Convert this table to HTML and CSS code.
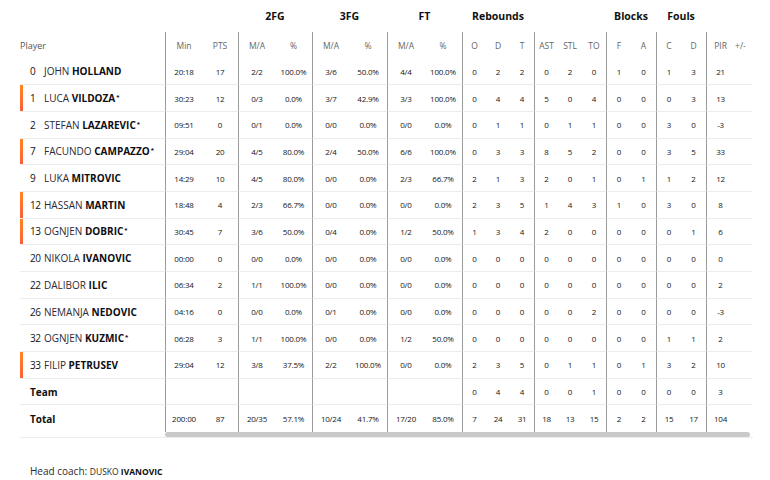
FILE: index.html
```html
<!DOCTYPE html>
<html lang="en">
<head>
<meta charset="utf-8">
<title>Box score</title>
<link rel="stylesheet" href="styles.css">
</head>
<body>
<div class="wrap">
  <table class="stats">
    <colgroup>
      <col class="c-player">
      <col class="c37"><col class="c36">
      <col class="c37"><col class="c37">
      <col class="c37"><col class="c38">
      <col class="c37"><col class="c38">
      <col class="c24"><col class="c24"><col class="c24">
      <col class="c24"><col class="c24"><col class="c24">
      <col class="c25"><col class="c25">
      <col class="c25"><col class="c25">
      <col class="c28"><col class="c18">
    </colgroup>
    <thead>
      <tr class="groups">
        <th></th>
        <th colspan="2"></th>
        <th colspan="2">2FG</th>
        <th colspan="2">3FG</th>
        <th colspan="2">FT</th>
        <th colspan="3">Rebounds</th>
        <th colspan="3"></th>
        <th colspan="2">Blocks</th>
        <th colspan="2">Fouls</th>
        <th colspan="2"></th>
      </tr>
      <tr class="sub">
        <th class="player-h">Player</th>
        <th>Min</th><th>PTS</th>
        <th>M/A</th><th>%</th>
        <th>M/A</th><th>%</th>
        <th>M/A</th><th>%</th>
        <th>O</th><th>D</th><th>T</th>
        <th>AST</th><th>STL</th><th>TO</th>
        <th>F</th><th>A</th>
        <th>C</th><th>D</th>
        <th>PIR</th><th class="pm">+/-</th>
      </tr>
    </thead>
    <tbody>
      <tr>
        <td class="name"><span class="num">0</span>JOHN <b>HOLLAND</b></td>
        <td>20:18</td><td>17</td><td>2/2</td><td>100.0%</td><td>3/6</td><td>50.0%</td><td>4/4</td><td>100.0%</td>
        <td>0</td><td>2</td><td>2</td><td>0</td><td>2</td><td>0</td><td>1</td><td>0</td><td>1</td><td>3</td><td>21</td><td></td>
      </tr>
      <tr class="starter">
        <td class="name"><span class="num">1</span>LUCA <b>VILDOZA<sup>*</sup></b></td>
        <td>30:23</td><td>12</td><td>0/3</td><td>0.0%</td><td>3/7</td><td>42.9%</td><td>3/3</td><td>100.0%</td>
        <td>0</td><td>4</td><td>4</td><td>5</td><td>0</td><td>4</td><td>0</td><td>0</td><td>0</td><td>3</td><td>13</td><td></td>
      </tr>
      <tr>
        <td class="name"><span class="num">2</span>STEFAN <b>LAZAREVIC<sup>*</sup></b></td>
        <td>09:51</td><td>0</td><td>0/1</td><td>0.0%</td><td>0/0</td><td>0.0%</td><td>0/0</td><td>0.0%</td>
        <td>0</td><td>1</td><td>1</td><td>0</td><td>1</td><td>1</td><td>0</td><td>0</td><td>3</td><td>0</td><td>-3</td><td></td>
      </tr>
      <tr class="starter">
        <td class="name"><span class="num">7</span>FACUNDO <b>CAMPAZZO<sup>*</sup></b></td>
        <td>29:04</td><td>20</td><td>4/5</td><td>80.0%</td><td>2/4</td><td>50.0%</td><td>6/6</td><td>100.0%</td>
        <td>0</td><td>3</td><td>3</td><td>8</td><td>5</td><td>2</td><td>0</td><td>0</td><td>3</td><td>5</td><td>33</td><td></td>
      </tr>
      <tr>
        <td class="name"><span class="num">9</span>LUKA <b>MITROVIC</b></td>
        <td>14:29</td><td>10</td><td>4/5</td><td>80.0%</td><td>0/0</td><td>0.0%</td><td>2/3</td><td>66.7%</td>
        <td>2</td><td>1</td><td>3</td><td>2</td><td>0</td><td>1</td><td>0</td><td>1</td><td>1</td><td>2</td><td>12</td><td></td>
      </tr>
      <tr class="starter">
        <td class="name"><span class="num">12</span>HASSAN <b>MARTIN</b></td>
        <td>18:48</td><td>4</td><td>2/3</td><td>66.7%</td><td>0/0</td><td>0.0%</td><td>0/0</td><td>0.0%</td>
        <td>2</td><td>3</td><td>5</td><td>1</td><td>4</td><td>3</td><td>1</td><td>0</td><td>3</td><td>0</td><td>8</td><td></td>
      </tr>
      <tr class="starter">
        <td class="name"><span class="num">13</span>OGNJEN <b>DOBRIC<sup>*</sup></b></td>
        <td>30:45</td><td>7</td><td>3/6</td><td>50.0%</td><td>0/4</td><td>0.0%</td><td>1/2</td><td>50.0%</td>
        <td>1</td><td>3</td><td>4</td><td>2</td><td>0</td><td>0</td><td>0</td><td>0</td><td>0</td><td>1</td><td>6</td><td></td>
      </tr>
      <tr>
        <td class="name"><span class="num">20</span>NIKOLA <b>IVANOVIC</b></td>
        <td>00:00</td><td>0</td><td>0/0</td><td>0.0%</td><td>0/0</td><td>0.0%</td><td>0/0</td><td>0.0%</td>
        <td>0</td><td>0</td><td>0</td><td>0</td><td>0</td><td>0</td><td>0</td><td>0</td><td>0</td><td>0</td><td>0</td><td></td>
      </tr>
      <tr>
        <td class="name"><span class="num">22</span>DALIBOR <b>ILIC</b></td>
        <td>06:34</td><td>2</td><td>1/1</td><td>100.0%</td><td>0/0</td><td>0.0%</td><td>0/0</td><td>0.0%</td>
        <td>0</td><td>0</td><td>0</td><td>0</td><td>0</td><td>0</td><td>0</td><td>0</td><td>0</td><td>0</td><td>2</td><td></td>
      </tr>
      <tr>
        <td class="name"><span class="num">26</span>NEMANJA <b>NEDOVIC</b></td>
        <td>04:16</td><td>0</td><td>0/0</td><td>0.0%</td><td>0/1</td><td>0.0%</td><td>0/0</td><td>0.0%</td>
        <td>0</td><td>0</td><td>0</td><td>0</td><td>0</td><td>2</td><td>0</td><td>0</td><td>0</td><td>0</td><td>-3</td><td></td>
      </tr>
      <tr>
        <td class="name"><span class="num">32</span>OGNJEN <b>KUZMIC<sup>*</sup></b></td>
        <td>06:28</td><td>3</td><td>1/1</td><td>100.0%</td><td>0/0</td><td>0.0%</td><td>1/2</td><td>50.0%</td>
        <td>0</td><td>0</td><td>0</td><td>0</td><td>0</td><td>0</td><td>0</td><td>0</td><td>1</td><td>1</td><td>2</td><td></td>
      </tr>
      <tr class="starter">
        <td class="name"><span class="num">33</span>FILIP <b>PETRUSEV</b></td>
        <td>29:04</td><td>12</td><td>3/8</td><td>37.5%</td><td>2/2</td><td>100.0%</td><td>0/0</td><td>0.0%</td>
        <td>2</td><td>3</td><td>5</td><td>0</td><td>1</td><td>1</td><td>0</td><td>1</td><td>3</td><td>2</td><td>10</td><td></td>
      </tr>
      <tr>
        <td class="name label">Team</td>
        <td></td><td></td><td></td><td></td><td></td><td></td><td></td><td></td>
        <td>0</td><td>4</td><td>4</td><td>0</td><td>0</td><td>1</td><td>0</td><td>0</td><td>0</td><td>0</td><td>3</td><td></td>
      </tr>
      <tr class="total">
        <td class="name label">Total</td>
        <td>200:00</td><td>87</td><td>20/35</td><td>57.1%</td><td>10/24</td><td>41.7%</td><td>17/20</td><td>85.0%</td>
        <td>7</td><td>24</td><td>31</td><td>18</td><td>13</td><td>15</td><td>2</td><td>2</td><td>15</td><td>17</td><td>104</td><td></td>
      </tr>
    </tbody>
  </table>
  <div class="scrollbar"></div>
</div>
<p class="coach">Head coach: <span class="coach-name">DUSKO <b>IVANOVIC</b></span></p>
</body>
</html>
```

FILE: styles.css
```css
html, body {
  margin: 0;
  padding: 0;
  background: #fff;
}
body {
  font-family: "Open Sans", "Noto Sans", sans-serif;
  color: #1d1d1f;
  padding-left: 20px;
}
.wrap {
  width: 733px;
  border-bottom: 1px solid #ececec;
}
.stats {
  table-layout: fixed;
  width: 732px;
  border-spacing: 0;
  border-collapse: separate;
}
.c-player { width: 145px; }
.c36 { width: 36px; }
.c37 { width: 37px; }
.c38 { width: 38px; }
.c24 { width: 24px; }
.c25 { width: 25px; }
.c28 { width: 28px; }
.c18 { width: 18px; }

.stats th, .stats td {
  padding: 0;
  text-align: center;
  white-space: nowrap;
  box-sizing: border-box;
}
.groups th {
  height: 32px;
  font-size: 10.5px;
  font-weight: 700;
  color: #111;
  vertical-align: middle;
  padding-bottom: 1px;
}
.sub th {
  height: 26.5px;
  font-size: 8.5px;
  font-weight: 400;
  color: #666;
  vertical-align: middle;
}
.sub th.player-h {
  text-align: left;
  font-size: 9px;
  color: #555;
}
.sub th.pm {
  text-align: left;
  padding-left: 1px;
}
.stats td {
  height: 26.7px;
  font-size: 8px;
  letter-spacing: -0.2px;
  color: #151515;
  border-bottom: 1px solid #ececec;
  vertical-align: middle;
}
.stats tr.total td {
  border-bottom: none;
}

.sub th:nth-child(2), .stats td:nth-child(2),
.sub th:nth-child(4), .stats td:nth-child(4),
.sub th:nth-child(6), .stats td:nth-child(6),
.sub th:nth-child(8), .stats td:nth-child(8),
.sub th:nth-child(10), .stats td:nth-child(10),
.sub th:nth-child(13), .stats td:nth-child(13),
.sub th:nth-child(16), .stats td:nth-child(16),
.sub th:nth-child(18), .stats td:nth-child(18),
.sub th:nth-child(20), .stats td:nth-child(20) {
  border-left: 1px solid #9a9a9a;
}

.stats td.name {
  text-align: left;
  padding-left: 10px;
  font-size: 10px;
  letter-spacing: 0;
  color: #2a2a35;
}
.num {
  display: inline-block;
  width: 14px;
  color: #111;
  letter-spacing: -0.4px;
}
.name b {
  font-weight: 700;
  color: #0d0d12;
}
.name sup {
  font-size: 6px;
  vertical-align: 3px;
  margin-left: 1px;
}
.stats td.label {
  font-weight: 700;
  color: #111;
}
tr.starter td.name {
  background: linear-gradient(#ff8524, #fb5f3b) no-repeat left top / 3px 100%;
}

.scrollbar {
  margin-left: 145px;
  width: 585px;
  height: 5px;
  border-radius: 3px;
  background: #c9c9c9;
}

.coach {
  margin: 27px 0 0 10px;
  font-size: 10px;
  line-height: 12px;
  color: #2a2a2a;
}
.coach-name {
  font-size: 8.5px;
}
.coach-name b {
  font-weight: 700;
  color: #0d0d12;
}
```
